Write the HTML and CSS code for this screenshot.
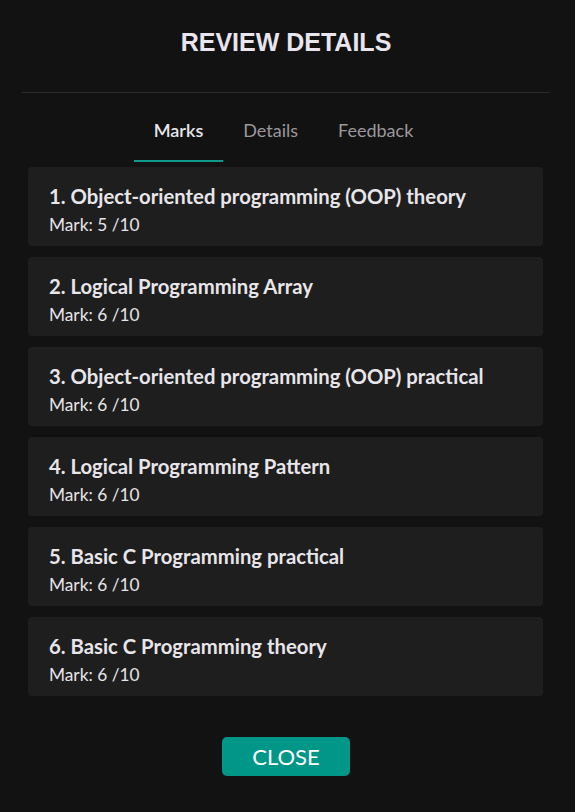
FILE: index.html
```html
<!DOCTYPE html>
<html>
<head>
<meta charset="utf-8">
<link rel="stylesheet" href="styles.css">
</head>
<body>
<div class="modal">
  <h1 class="title">REVIEW DETAILS</h1>
  <div class="divider"></div>
  <nav class="tabs">
    <div class="tab active">Marks</div>
    <div class="tab">Details</div>
    <div class="tab">Feedback</div>
  </nav>
  <div class="list">
    <div class="card"><div class="name">1. Object-oriented programming (OOP) theory</div><div class="mark">Mark: 5 /10</div></div>
    <div class="card"><div class="name">2. Logical Programming Array</div><div class="mark">Mark: 6 /10</div></div>
    <div class="card"><div class="name">3. Object-oriented programming (OOP) practical</div><div class="mark">Mark: 6 /10</div></div>
    <div class="card"><div class="name">4. Logical Programming Pattern</div><div class="mark">Mark: 6 /10</div></div>
    <div class="card"><div class="name">5. Basic C Programming practical</div><div class="mark">Mark: 6 /10</div></div>
    <div class="card"><div class="name">6. Basic C Programming theory</div><div class="mark">Mark: 6 /10</div></div>
  </div>
  <div class="actions"><button class="close">CLOSE</button></div>
</div>
</body>
</html>
```
FILE: styles.css
```css
html, body { margin: 0; padding: 0; background: #121212; }
body { width: 575px; height: 812px; font-family: Lato, "Open Sans", sans-serif; color: #e6e4e8; }
.modal { display: flex; flex-direction: column; padding-top: 30px; }
.title { margin: 0; text-align: center; font-family: "Liberation Sans", Arial, sans-serif; font-weight: 700; font-size: 25px; line-height: 24px; color: #e8e5ee; padding-right: 3px; }
.divider { height: 1px; background: #2c2c2c; margin: 38px 26px 0 22px; }
.tabs { display: flex; justify-content: center; margin-top: 18px; padding-right: 8px; }
.tab { font-size: 18px; line-height: 22px; color: #9a989c; padding: 8px 20px 19px; border-bottom: 2px solid transparent; }
.tab.active { color: #e8e6ea; border-bottom-color: #0e9b8b; font-weight: 600; }
.list { display: flex; flex-direction: column; gap: 11px; margin: 5px 32px 0 28px; }
.card { background: #1e1e1e; border-radius: 4px; height: 79px; box-sizing: border-box; padding: 16px 21px 0; }
.name { font-size: 20.3px; line-height: 26px; font-weight: 700; color: #e8e6ea; }
.mark { font-size: 17.3px; line-height: 20px; margin-top: 6px; color: #e6e4e8; }
.actions { display: flex; justify-content: center; margin-top: 41px; padding-right: 3px; }
.close { width: 128px; height: 39px; border: none; border-radius: 5px; background: #009688; color: #fff; font-family: Lato, sans-serif; font-size: 22px; padding: 0; }
```
